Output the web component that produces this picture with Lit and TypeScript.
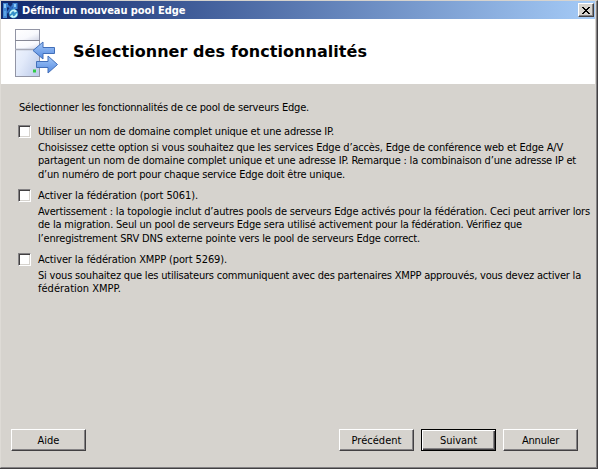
import { LitElement, html, css, svg } from "lit";
import { customElement, property } from "lit/decorators.js";

/** One line of dialog text, tracked so that it spans a given width. */
@customElement("text-line")
class TextLine extends LitElement {
  @property({ type: Number }) span = 0;
  @property() text = "";

  static styles = css`
    :host { display: block; white-space: nowrap; }
    span { display: inline-block; }
  `;

  updated() {
    const el = this.renderRoot.querySelector("span") as HTMLElement;
    el.style.letterSpacing = "0px";
    const natural = el.getBoundingClientRect().width;
    el.style.letterSpacing = `${(this.span - natural) / this.text.length}px`;
  }

  render() {
    return html`<span>${this.text}</span>`;
  }
}

type Line = [string, number];

const features: { label: Line; lines: Line[] }[] = [
  {
    label: ["Utiliser un nom de domaine complet unique et une adresse IP.", 296],
    lines: [
      ["Choisissez cette option si vous souhaitez que les services Edge d’accès, Edge de conférence web et Edge A/V", 525],
      ["partagent un nom de domaine complet unique et une adresse IP. Remarque : la combinaison d’une adresse IP et", 538],
      ["d’un numéro de port pour chaque service Edge doit être unique.", 307],
    ],
  },
  {
    label: ["Activer la fédération (port 5061).", 160],
    lines: [
      ["Avertissement : la topologie inclut d’autres pools de serveurs Edge activés pour la fédération. Ceci peut arriver lors", 552],
      ["de la migration. Seul un pool de serveurs Edge sera utilisé activement pour la fédération. Vérifiez que", 484],
      ["l’enregistrement SRV DNS externe pointe vers le pool de serveurs Edge correct.", 382],
    ],
  },
  {
    label: ["Activer la fédération XMPP (port 5269).", 189],
    lines: [
      ["Si vous souhaitez que les utilisateurs communiquent avec des partenaires XMPP approuvés, vous devez activer la", 543],
      ["fédération XMPP.", 83],
    ],
  },
];

const appIcon = svg`
  <svg width="17" height="17" viewBox="0 0 17 17">
    <path d="M5 3L11 8M11 3L5 11" stroke="#2f6cc0" stroke-width="2"/>
    <path d="M1 1H6V4.500L5 6V16H1Z" fill="#3f86d4"/>
    <rect x="2" y="2" width="2" height="4" fill="#8cc8f4"/>
    <rect x="2" y="9" width="2" height="5" fill="#5ba3e4"/>
    <path d="M10.500 1H15.500V7H10.500Z" fill="#3f86d4"/>
    <rect x="12" y="2" width="2" height="3" fill="#8cc8f4"/>
    <circle cx="11.500" cy="11.800" r="4.700" fill="#3290c8"/>
    <path d="M8.300 11.800a3.200 3.200 0 0 1 5-2.800M14.700 11.500a3.200 3.200 0 0 1-5 2.900" fill="none" stroke="#c9f7f8" stroke-width="1.600"/>
    <path d="M12.300 7.300l3 2-3 1.500zM10.800 16l-3-1.800 3-1.700z" fill="#c9f7f8"/>
  </svg>`;

const serverIcon = svg`
  <svg width="46" height="52" viewBox="14 27 46 52">
    <defs>
      <linearGradient id="body" x1="0" y1="0" x2="1" y2="1">
        <stop offset="0" stop-color="#f6f9ff"/><stop offset=".5" stop-color="#e2eafa"/><stop offset="1" stop-color="#b9c8e8"/>
      </linearGradient>
      <linearGradient id="panel" x1="0" y1="0" x2="1" y2="1">
        <stop offset="0" stop-color="#fff"/><stop offset=".6" stop-color="#f8f9fd"/><stop offset="1" stop-color="#d5d9e8"/>
      </linearGradient>
      <linearGradient id="arrow" x1="0" y1="0" x2="0" y2="1">
        <stop offset="0" stop-color="#a5cafa"/><stop offset="1" stop-color="#5489df"/>
      </linearGradient>
    </defs>
    <rect x="15.500" y="29.500" width="24" height="47" fill="url(#body)" stroke="#9295a5"/>
    <rect x="16" y="30" width="23" height="10" fill="url(#panel)"/>
    <rect x="16" y="41" width="23" height="7.500" fill="url(#panel)"/>
    <path d="M15 40.500H40" stroke="#858794"/>
    <path d="M15 49.500H40" stroke="#a6a9b6" stroke-width="1.500"/>
    <rect x="33" y="69.500" width="3" height="3" fill="#2fcb45"/>
    <path d="M33 50.500L43 42V47.500H54.500V53.500H43V59Z" fill="url(#arrow)" stroke="#426fb9"/>
    <path d="M57.500 64.500L48 56V61.500H36.500V67.500H48V73Z" fill="url(#arrow)" stroke="#426fb9"/>
  </svg>`;

@customElement("app-root")
class AppRoot extends LitElement {
  static styles = css`
    :host {
      display: block;
      width: 598px;
      height: 469px;
      font: 11px/13px "DejaVu Sans Condensed", "DejaVu Sans", sans-serif;
      font-stretch: condensed;
      color: #000;
    }
    * { box-sizing: border-box; }
    .window {
      display: flex;
      flex-direction: column;
      height: 469px;
      background: #d6d3ce;
      border: solid;
      border-width: 1px 1px 1px 0;
      border-color: #d6d3ce #424042 #424042 #d6d3ce;
    }
    .inner {
      display: flex;
      flex-direction: column;
      flex: 1;
      border: solid;
      border-width: 0 1px 1px 1px;
      border-color: #d6d3ce #848284 #848284 #dedbd6;
    }
    .titlebar {
      display: flex;
      align-items: center;
      height: 18px;
      margin-right: 1px;
      padding: 0 1px;
      background: linear-gradient(90deg, #10286c, #a5cbf7);
      color: #fff;
      font-weight: bold;
    }
    .titlebar svg { flex: none; }
    .titlebar text-line { flex: 1; margin-left: 3px; }
    .close {
      display: flex;
      align-items: center;
      justify-content: center;
      width: 16px;
      height: 14px;
      background: #d6d3ce;
      border: 1px solid;
      border-color: #fff #424042 #424042 #fff;
      box-shadow: inset -1px -1px #848284;
    }
    .header {
      display: flex;
      height: 65px;
      margin-right: 1px;
      padding: 8px 0 0 13px;
      background: #fff;
    }
    .header text-line {
      margin: 15px 0 0 13px;
      font: bold 16px/20px "DejaVu Sans", sans-serif;
      font-stretch: normal;
    }
    .content { flex: 1; padding: 17px 0 0 17px; }
    .feature { display: grid; grid-template-columns: 20px 1fr; height: 64px; }
    .intro { height: 24px; padding-left: 1px; }
    .box {
      width: 13px;
      height: 13px;
      background: #fff;
      border: 1px solid;
      border-color: #848284 #fff #fff #848284;
      box-shadow: inset 1px 1px #424042, inset -1px -1px #d6d3ce;
    }
    .label { height: 16px; }
    .last { margin-top: 1px; }
    .buttons {
      display: flex;
      gap: 7px;
      padding: 0 18px 16px 10px;
    }
    .button {
      display: flex;
      align-items: center;
      justify-content: center;
      width: 75px;
      height: 22px;
      border: 1px solid;
      border-color: #fff #424042 #424042 #fff;
      box-shadow: inset -1px -1px #848284;
    }
    .button:first-child { margin-right: auto; }
    .default {
      border-color: #000;
      box-shadow: inset 1px 1px #fff, inset -1px -1px #424042, inset -2px -2px #848284;
    }
  `;

  render() {
    return html`
      <div class="window"><div class="inner">
        <div class="titlebar">
          ${appIcon}
          <text-line text="Définir un nouveau pool Edge" .span=${163}></text-line>
          <div class="close">
            <svg width="8" height="7" viewBox="0 0 8 7" shape-rendering="crispEdges">
              <path d="M0 0h2v1h1v1h2v-1h1v-1h2v1h-1v1h-1v1h-1v1h1v1h1v1h1v1h-2v-1h-1v-1h-2v1h-1v1h-2v-1h1v-1h1v-1h1v-1h-1v-1h-1v-1h-1z"/>
            </svg>
          </div>
        </div>
        <div class="header">
          ${serverIcon}
          <text-line text="Sélectionner des fonctionnalités" .span=${294}></text-line>
        </div>
        <div class="content">
          <text-line class="intro" text="Sélectionner les fonctionnalités de ce pool de serveurs Edge." .span=${290}></text-line>
          ${features.map(
            (f) => html`
              <div class="feature">
                <div class="box"></div>
                <div>
                  <text-line class="label" .text=${f.label[0]} .span=${f.label[1]}></text-line>
                  ${f.lines.map(
                    ([t, w], i) => html`<text-line class=${i === 2 ? "last" : ""} .text=${t} .span=${w}></text-line>`
                  )}
                </div>
              </div>
            `
          )}
        </div>
        <div class="buttons">
          <div class="button"><text-line text="Aide" .span=${22}></text-line></div>
          <div class="button"><text-line text="Précédent" .span=${50}></text-line></div>
          <div class="button default"><text-line text="Suivant" .span=${37}></text-line></div>
          <div class="button"><text-line text="Annuler" .span=${37}></text-line></div>
        </div>
      </div></div>
    `;
  }
}
